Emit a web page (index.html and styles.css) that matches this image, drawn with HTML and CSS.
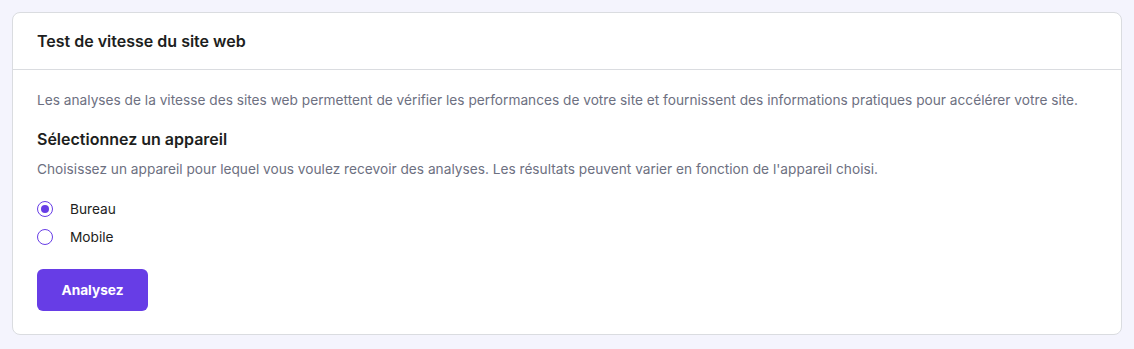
FILE: index.html
```html
<!DOCTYPE html>
<html lang="fr">
<head>
<meta charset="utf-8">
<link rel="stylesheet" href="styles.css">
</head>
<body>
<div class="card">
  <div class="card-header">
    <h2 class="card-title">Test de vitesse du site web</h2>
  </div>
  <div class="card-body">
    <p class="desc">Les analyses de la vitesse des sites web permettent de vérifier les performances de votre site et fournissent des informations pratiques pour accélérer votre site.</p>
    <h3 class="subtitle">Sélectionnez un appareil</h3>
    <p class="desc desc-small">Choisissez un appareil pour lequel vous voulez recevoir des analyses. Les résultats peuvent varier en fonction de l'appareil choisi.</p>
    <div class="radios">
      <label class="radio"><span class="radio-dot checked"></span><span class="radio-label">Bureau</span></label>
      <label class="radio"><span class="radio-dot"></span><span class="radio-label">Mobile</span></label>
    </div>
    <button class="btn">Analysez</button>
  </div>
</div>
</body>
</html>
```
FILE: styles.css
```css
* { box-sizing: border-box; }
html, body { margin: 0; padding: 0; }
body {
  background: #f4f4fd;
  font-family: "Inter", "Noto Sans", sans-serif;
  padding: 12px;
  width: 1134px;
  height: 349px;
}
.card {
  background: #fff;
  border: 1px solid #dadce0;
  border-radius: 8px;
  width: 1110px;
  height: 323px;
}
.card-header {
  height: 57px;
  display: flex;
  align-items: center;
  padding: 0 24px;
  border-bottom: 1px solid #dadce0;
}
.card-title {
  margin: 0;
  font-size: 16px;
  font-weight: 600;
  color: #1d1e20;
}
.card-body {
  padding: 20px 24px 24px;
}
.desc {
  margin: 0;
  font-size: 13.7px;
  line-height: 20px;
  color: #6d7081;
}
.subtitle {
  margin: 17px 0 0;
  font-size: 16px;
  font-weight: 600;
  line-height: 24px;
  color: #1d1e20;
}
.desc-small { margin-top: 8px; }
.radios {
  margin-top: 20px;
  display: flex;
  flex-direction: column;
  gap: 8px;
}
.radio {
  display: flex;
  align-items: center;
  height: 20px;
}
.radio-dot {
  width: 16px;
  height: 16px;
  border: 1.5px solid #673de6;
  border-radius: 50%;
  position: relative;
  flex-shrink: 0;
}
.radio-dot.checked::after {
  content: "";
  position: absolute;
  left: 2.5px;
  top: 2.5px;
  width: 8px;
  height: 8px;
  border-radius: 50%;
  background: #673de6;
}
.radio-label {
  margin-left: 17px;
  font-size: 13.7px;
  color: #1d1e20;
}
.btn {
  margin-top: 22px;
  width: 111px;
  height: 42px;
  border: none;
  border-radius: 6px;
  background: #673de6;
  color: #fff;
  font-family: inherit;
  font-size: 13.7px;
  font-weight: 700;
}
```
